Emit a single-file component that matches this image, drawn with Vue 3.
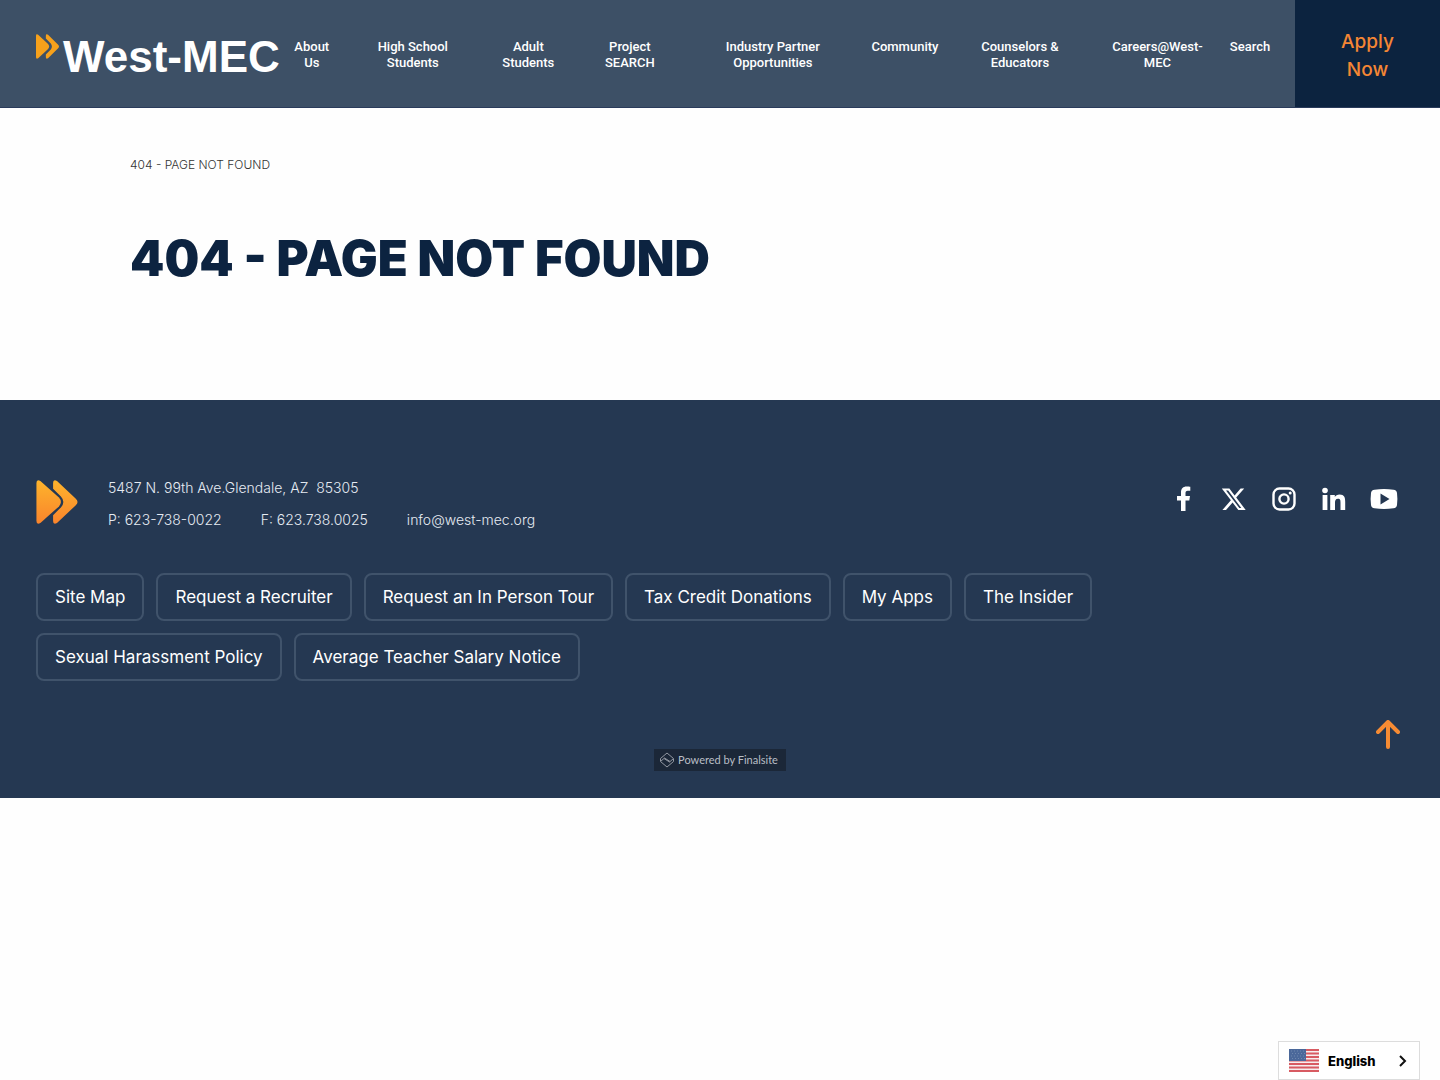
<script setup>
const navItems = [
  ['About', 'Us'],
  ['High School', 'Students'],
  ['Adult', 'Students'],
  ['Project', 'SEARCH'],
  ['Industry Partner', 'Opportunities'],
  ['Community'],
  ['Counselors &', 'Educators'],
  ['Careers@West-', 'MEC'],
  ['Search']
]

const footerLinks = [
  'Site Map',
  'Request a Recruiter',
  'Request an In Person Tour',
  'Tax Credit Donations',
  'My Apps',
  'The Insider',
  'Sexual Harassment Policy',
  'Average Teacher Salary Notice'
]
</script>

<template>
  <header class="site-header">
    <a class="logo" href="#">
      <svg class="logo-mark" viewBox="0 0 42 45" aria-hidden="true">
        <path fill="#f7a11b" d="M0 3Q0 -1 4 1L22 18Q26 22.500 22 27L4 44Q0 46 0 42Z" />
        <path fill="#f7a11b" d="M18 3Q18 -1 22 1L40 19Q44 22.500 40 26L22 44Q18 46 18 42V37L27 28Q31 22.500 27 17L18 8Z" />
      </svg>
      <span class="logo-name">West-MEC</span>
    </a>
    <nav class="main-nav" aria-label="Main">
      <a v-for="item in navItems" :key="item[0]" href="#">
        <span v-for="line in item" :key="line">{{ line }}</span>
      </a>
    </nav>
    <a class="apply" href="#"><span>Apply</span> <span>Now</span></a>
  </header>

  <main class="content">
    <p class="crumb">404 - PAGE NOT FOUND</p>
    <h1>404 - PAGE NOT FOUND</h1>
  </main>

  <footer class="site-footer">
    <div class="footer-top">
      <svg class="footer-mark" viewBox="0 0 42 45" aria-hidden="true">
        <defs>
          <linearGradient id="mark" x1="0" y1="0" x2="0" y2="1">
            <stop offset="0" stop-color="#fdb42c" />
            <stop offset="1" stop-color="#fa842c" />
          </linearGradient>
        </defs>
        <path fill="url(#mark)" d="M0 3Q0 -1 4 1L23 18Q27 22.500 23 27L4 44Q0 46 0 42Z" />
        <path fill="url(#mark)" d="M17 3Q17 -1 21 1L40 19Q44 22.500 40 26L21 44Q17 46 17 42V36L25 28Q30 22.500 25 17L17 9Z" />
      </svg>
      <address>
        <p>5487 N. 99th Ave.Glendale, AZ&nbsp; 85305</p>
        <p class="contacts">
          <a href="#">P: 623-738-0022</a>
          <span>F: 623.738.0025</span>
          <a href="#">info@west-mec.org</a>
        </p>
      </address>
      <div class="social">
        <a href="#" aria-label="Facebook">
          <svg viewBox="0 0 28 28"><path d="M11 26V15.500H7V11h4V7.500C11 3.500 13.200 1.500 16.500 1.500c1.600 0 3.100.2 3.800.3v4h-2.500c-1.900 0-2.300.9-2.300 2.400V11h4.500l-.7 4.500h-3.800V26z" /></svg>
        </a>
        <a href="#" aria-label="X">
          <svg viewBox="0 0 28 28"><path d="M20.600 3.500h3.600l-8 9.100L25.700 25h-7.400l-5.700-7.500L6 25H2.400l8.500-9.800L1.800 3.500h7.600l5.200 6.900zM19.300 22.900h2L8.200 5.500H6z" /></svg>
        </a>
        <a href="#" aria-label="Instagram">
          <svg viewBox="0 0 28 28">
            <rect class="line" x="3.500" y="3.500" width="21" height="21" rx="6" />
            <circle class="line" cx="14" cy="14" r="4.600" />
            <circle cx="20.200" cy="7.900" r="1.500" />
          </svg>
        </a>
        <a href="#" aria-label="LinkedIn">
          <svg viewBox="0 0 28 28">
            <circle cx="5" cy="5.500" r="2.800" />
            <path d="M2.600 10h4.800v15H2.600zM10.200 10h4.600v2.100c.9-1.500 2.500-2.500 4.800-2.500 4.700 0 5.600 3 5.600 7.200V25h-4.700v-7.300c0-2 0-3.900-2.500-3.900s-3 1.900-3 3.900V25h-4.800z" />
          </svg>
        </a>
        <a href="#" aria-label="YouTube">
          <svg viewBox="0 0 28 28"><path fill-rule="evenodd" d="M4.500 4.700Q14 3.500 23.500 4.700Q26.700 5 27 8Q27.800 14 27 20Q26.700 23 23.500 23.300Q14 24.500 4.500 23.300Q1.300 23 1 20Q.2 14 1 8Q1.300 5 4.500 4.700ZM10.500 8.500V19.500L19.500 14Z" /></svg>
        </a>
      </div>
    </div>

    <nav class="footer-links" aria-label="Footer">
      <a v-for="link in footerLinks" :key="link" href="#">{{ link }}</a>
    </nav>

    <div class="footer-bottom">
      <a class="powered" href="#">
        <svg viewBox="0 0 16 16" aria-hidden="true">
          <path d="M1.500 9V6.500L8 1L14.500 6.500L10.500 10L5 6.500M14.500 7V9.500L8 15L1.500 9.500L5.500 6L11 9.500" />
        </svg>
        Powered by Finalsite
      </a>
      <button class="to-top" type="button" aria-label="Back to top">
        <svg viewBox="0 0 24 30"><path d="M12 27V3M2 12L12 2L22 12" /></svg>
      </button>
    </div>
  </footer>

  <button class="language" type="button">
    <svg class="flag" viewBox="0 0 30 23" aria-hidden="true">
      <rect width="30" height="23" fill="#f7eeee" />
      <path stroke="#d85b62" stroke-width="2" d="M0 1H30M0 4.500H30M0 8H30M0 11.500H30M0 15H30M0 18.500H30M0 22H30" />
      <rect width="17" height="12" fill="#4b689a" />
      <path stroke="#6f87ae" stroke-dasharray="1 2" d="M2 2H16M3 4.500H16M2 7H16M3 9.500H16" />
    </svg>
    English
    <svg class="chevron" viewBox="0 0 8 12" aria-hidden="true"><path d="M1 1L6 6L1 11" /></svg>
  </button>
</template>

<style>
body {
  margin: 0;
  background: #fefefe;
  font-family: Inter, "Liberation Sans", sans-serif;
}
</style>

<style scoped>
a {
  color: inherit;
  text-decoration: none;
}

p,
h1 {
  margin: 0;
}

svg {
  display: block;
}

.site-header {
  display: flex;
  box-sizing: border-box;
  min-height: 108px;
  background: #3d5066;
  border-bottom: 1px solid #2a3b5b;
  color: #fff;
}

.logo {
  display: flex;
  align-items: flex-start;
  flex: none;
  padding: 34px 0 0 36px;
}

.logo-mark {
  width: 23px;
  height: 25px;
  margin-right: 4px;
}

.logo-name {
  font: bold 44px/46px "Liberation Sans", sans-serif;
}

.main-nav {
  display: grid;
  flex: 1;
  grid-template-columns: 64fr 138fr 93fr 110fr 176fr 88fr 142fr 133fr 52fr;
  padding: 39px 19px 0 0;
  font: 500 13px/16px Roboto, sans-serif;
  text-align: center;
  white-space: nowrap;
}

.main-nav a {
  display: flex;
  flex-direction: column;
  align-items: center;
}

.apply {
  display: flex;
  flex-direction: column;
  align-items: center;
  justify-content: center;
  flex: none;
  box-sizing: border-box;
  width: 145px;
  padding-top: 4px;
  background: #0c233f;
  color: #f58634;
  font-size: 19px;
  font-weight: 500;
  line-height: 28px;
}

.content {
  padding: 47px 130px 111px;
}

.crumb {
  color: #333;
  font-size: 12px;
  font-weight: 300;
  line-height: 20px;
}

h1 {
  margin-top: 54px;
  color: #0c2340;
  font-size: 49px;
  font-weight: 900;
  line-height: 60px;
}

.site-footer {
  padding: 72px 36px 27px;
  background: #253852;
  color: #fff;
}

.footer-top {
  display: flex;
  align-items: flex-start;
}

.footer-mark {
  width: 42px;
  height: 44px;
  margin: 8px 30px 0 0;
}

address {
  flex: 1;
  color: #e6ebf2;
  font-size: 14px;
  font-style: normal;
  font-weight: 300;
  line-height: 32px;
}

.contacts {
  display: flex;
  gap: 39px;
}

.social {
  display: flex;
  gap: 22px;
  padding: 13px 6px 0 0;
}

.social svg {
  width: 28px;
  height: 28px;
  fill: #fff;
}

.social .line {
  fill: none;
  stroke: #fff;
  stroke-width: 2.4;
}

.footer-links {
  display: flex;
  flex-wrap: wrap;
  gap: 12px;
  max-width: 1080px;
  margin-top: 37px;
}

.footer-links a {
  padding: 0 17px;
  border: 2px solid #40536b;
  border-radius: 8px;
  font-size: 17px;
  line-height: 44px;
}

.footer-bottom {
  display: grid;
  grid-template-columns: 1fr auto 1fr;
  align-items: end;
  margin-top: 38px;
  min-height: 52px;
}

.powered {
  display: flex;
  grid-column: 2;
  align-items: center;
  gap: 3px;
  padding: 0 8px 0 5px;
  background: #1b2738;
  color: #b9bec5;
  font: 11px/22px Lato, sans-serif;
}

.powered svg {
  width: 16px;
  height: 16px;
  fill: none;
  stroke: #9298a2;
}

.to-top {
  align-self: start;
  justify-self: end;
  margin: 1px 4px 0 0;
  padding: 0;
  border: 0;
  background: none;
}

.to-top svg {
  width: 24px;
  height: 30px;
  fill: none;
  stroke: #f68b33;
  stroke-linecap: round;
  stroke-linejoin: round;
  stroke-width: 4;
}

.language {
  position: fixed;
  right: 20px;
  bottom: 0;
  display: flex;
  align-items: center;
  box-sizing: border-box;
  width: 142px;
  height: 39px;
  padding: 0 12px 0 10px;
  border: 1px solid #ddd;
  background: #fff;
  color: #000;
  font: 800 13px/20px Inter, sans-serif;
}

.flag {
  width: 30px;
  height: 23px;
  margin-right: 9px;
}

.chevron {
  width: 8px;
  height: 12px;
  margin-left: auto;
  fill: none;
  stroke: #111;
  stroke-width: 2;
}
</style>
